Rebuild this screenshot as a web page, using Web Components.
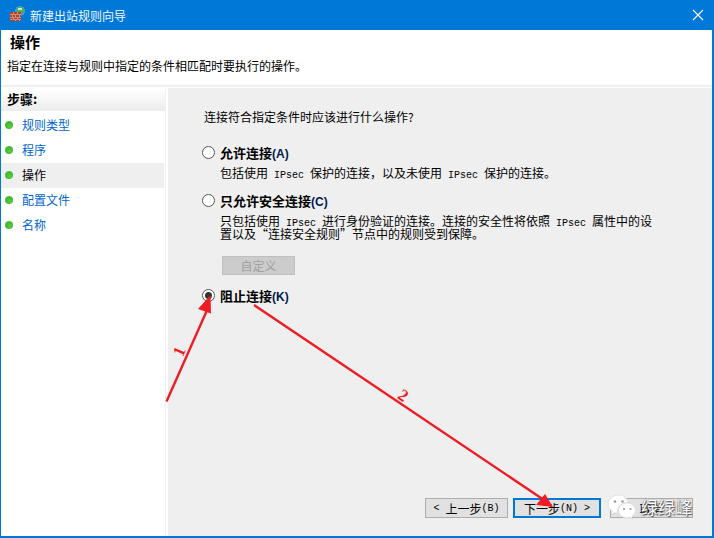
<!DOCTYPE html>
<html lang="zh-CN"><head><meta charset="utf-8">
<style>
html,body{margin:0;padding:0;background:#fff}
body{width:714px;height:538px;overflow:hidden;font:12px "Noto Sans CJK SC","Liberation Sans",sans-serif;color:#000}
</style></head><body>
<wiz-window>
  <wiz-titlebar slot="title">新建出站规则向导</wiz-titlebar>
  <wiz-header slot="header" heading="操作">指定在连接与规则中指定的条件相匹配时要执行的操作。</wiz-header>
  <wiz-steps slot="steps">
    <wiz-step done>规则类型</wiz-step>
    <wiz-step done>程序</wiz-step>
    <wiz-step active>操作</wiz-step>
    <wiz-step done>配置文件</wiz-step>
    <wiz-step done>名称</wiz-step>
  </wiz-steps>
  <wiz-content slot="content">
    <wiz-radio key="A" label="允许连接">包括使用<m-t> IPsec </m-t>保护的连接，以及未使用<m-t> IPsec </m-t>保护的连接。</wiz-radio>
    <wiz-radio key="C" label="只允许安全连接" extra>只包括使用<m-t> IPsec </m-t>进行身份验证的连接。连接的安全性将依照<m-t> IPsec </m-t>属性中的设置以及“连接安全规则”节点中的规则受到保障。</wiz-radio>
    <wiz-radio key="K" label="阻止连接" checked></wiz-radio>
    <wiz-buttons slot="buttons"></wiz-buttons>
  </wiz-content>
  <wiz-annot slot="annot"></wiz-annot>
</wiz-window>
<script>
function def(name, css, html){
  customElements.define(name, class extends HTMLElement{
    connectedCallback(){
      if(this.shadowRoot) return;
      const r=this.attachShadow({mode:'open'});
      r.innerHTML='<style>'+css+'</style>'+(typeof html==='function'?html(this):html);
    }
  });
}
const mono='"Liberation Mono",monospace';
def('m-t',':host{display:inline;font-family:'+mono+';font-size:10px;line-height:0;white-space:pre}','<slot></slot>');
def('wiz-window',`
:host{display:flex;flex-direction:column;position:relative;width:714px;height:538px;box-sizing:border-box;border:solid #0078d7;border-width:0 2px 2px 1px;background:#fff;overflow:hidden}
.main{flex:1;display:flex;min-height:0}
`,`<slot name="title"></slot><slot name="header"></slot><div class="main"><slot name="steps"></slot><slot name="content"></slot></div><slot name="annot"></slot>`);
def('wiz-titlebar',`
:host{display:flex;align-items:center;height:30px;margin-right:-2px;margin-left:-1px;background:#0078d7;color:#fff;font-size:12px;flex:none}
svg.i{margin:-3px 4px 0 9px;flex:none}
.t{flex:1;opacity:.95}
svg.x{margin-right:10px;flex:none}
`,`<svg class="i" width="17" height="17" viewBox="0 0 17 17" shape-rendering="crispEdges">
<circle cx="11" cy="6" r="5" fill="#3f9ad8"/><path d="M7 5a5 5 0 0 1 8-2l0 4-5 1z" fill="#52b043"/><path d="M9 3h4v2h-4z" fill="#bfe3f7"/>
<rect x="1" y="7" width="11" height="9" fill="#a5442f"/>
<path d="M1 9.5h11M1 12h11M1 14.500h11M4 7v2M8 7v2M6 10v2M10 10v2M3 10v2M4 12v2M8 12v2M6 14v2M10 14v2" stroke="#d98a72" stroke-width="1"/>
</svg><span class="t"><slot></slot></span><svg class="x" width="12" height="12" viewBox="0 0 12 12"><path d="M1 1l10 10M11 1L1 11" stroke="#fff" stroke-width="1.1"/></svg>`);
def('wiz-header',`
:host{display:block;height:58px;box-sizing:border-box;padding:1px 0 0 6px;background:#fff;flex:none}
h1{margin:0 0 0 3px;font:700 15px/21px "Noto Sans CJK SC",sans-serif}
p{margin:6px 0 0;font-size:12px;line-height:16px;color:#000}
.r{height:2px;background:#f0f0f0;margin:11px 0 0 -6px}
`,h=>`<h1>${h.getAttribute('heading')}</h1><p><slot></slot></p><div class="r"></div>`);
def('wiz-steps',`
:host{display:flex;flex-direction:column;width:164px;flex:none;background:#fff;border-right:1px solid #f0f0f0;margin-right:2px;margin-top:1px}
.hd{height:22px;line-height:20px;padding-left:6px;font-weight:700;font-size:13px;background:linear-gradient(#fff,#ececec);margin-bottom:2px}
.list{display:flex;flex-direction:column}
`,`<div class="hd">步骤:</div><div class="list"><slot></slot></div>`);
def('wiz-step',`
:host{display:flex;align-items:center;height:25px;box-sizing:border-box;padding-bottom:2px;font-size:12px;color:#0066cc;margin-right:1px}
:host([active]){background:#efefef;color:#000}
i{width:8px;height:8px;border-radius:50%;margin:1px 9px 0 4px;background:radial-gradient(circle at 60% 65%,#5ad03c 0,#3fb82e 55%,#8fc98a 100%);flex:none}
`,`<i></i><slot></slot>`);
def('wiz-content',`
:host{flex:1;display:flex;flex-direction:column;background:#efefef;padding:21px 0 0 36px;position:relative;min-width:0}
.q{font-size:12px;line-height:16px;margin-bottom:20px}
`,`<div class="q">连接符合指定条件时应该进行什么操作?</div><slot></slot><slot name="buttons"></slot>`);
def('wiz-radio',`
:host{display:grid;grid-template-columns:18px 436px;margin:0 0 14px -2px}
.c{width:11px;height:11px;border:1px solid #555;border-radius:50%;background:#fff;margin-top:1px;position:relative;box-sizing:content-box}
.c.on::after{content:"";position:absolute;left:2px;top:2px;width:7px;height:7px;border-radius:50%;background:#333}
.l{font-weight:700;font-size:13px;line-height:16px;margin-bottom:5px}
.l span{font:700 12px "Liberation Sans",sans-serif;color:#001a4d}
.d{grid-column:2;font-size:12px;line-height:13px}
button{grid-column:2;margin:16px 0 -1px 2px;width:73px;height:19px;background:#ccc;border:1px solid #bfbfbf;color:#a0a0a0;font:12px "Noto Sans CJK SC",sans-serif;padding:0;display:block}
`,h=>`<div class="c ${h.hasAttribute('checked')?'on':''}"></div><div class="l">${h.getAttribute('label')}<span>(${h.getAttribute('key')})</span></div>${h.textContent.trim()?'<div class="d"><slot></slot></div>':''}${h.hasAttribute('extra')?'<button>自定义</button>':''}`);
def('wiz-buttons',`
:host{position:absolute;left:257px;bottom:18px;display:flex;gap:5px}
b{display:flex;align-items:center;justify-content:center;height:20px;box-sizing:border-box;border:1px solid #adadad;background:#e1e1e1;font:400 12px "Noto Sans CJK SC",sans-serif;white-space:pre}
.a{width:83px}.n{width:88px;border:2px solid #0078d7}.c{width:83px;margin-left:4px}
tt{font:10px ${mono}}
`,`<b class="a"><tt>&lt; </tt>上一步<tt>(B)</tt></b><b class="n">下一步<tt>(N) &gt;</tt></b><b class="c">取消</b>`);
def('wiz-annot',`
:host{position:absolute;left:-1px;top:0;width:714px;height:538px;display:block;pointer-events:none}
svg{position:absolute;left:0;top:0}
.n{position:absolute;color:#ee1c25;font:700 17px "Liberation Serif",serif;line-height:17px}
.n1{left:175px;top:343px;transform:rotate(-67deg)}
.n2{left:399px;top:387px;transform:rotate(35deg)}
.wm{position:absolute;left:641px;top:497px;font:17px/20px "Noto Sans CJK SC",sans-serif;color:#fff;text-shadow:0 0 1px #444,1px 1px 1px #555}
`,`<svg width="714" height="538" viewBox="0 0 714 538">
<path d="M166.500 401.500L208 308M254 305L544 500" stroke="#ee1c25" stroke-width="2.400" fill="none"/>
<path d="M210.500 295L198 309L211 313.500zM553 507L536 505L545 494z" fill="#ee1c25"/>
<path d="M619 495c-6 0-11 4-11 9.200 0 3 1.600 5.500 4.200 7.200l-1 3.100 3.500-1.800c1 .3 2.200.5 3.300.6-.2-.7-.3-1.400-.3-2.100 0-4.800 4.300-8.500 9.800-8.500h.8C627 498 623.500 495 619 495z" fill="#fff" stroke="#c8c8c8" stroke-width=".5"/>
<path d="M635.500 510.500c0-4.200-3.800-7.500-8.500-7.500s-8.500 3.300-8.500 7.500 3.800 7.500 8.500 7.500c1 0 1.900-.1 2.800-.4l2.700 1.400-.7-2.500c2.200-1.400 3.700-3.500 3.700-6z" fill="#fff" stroke="#c8c8c8" stroke-width=".5"/>
<circle cx="615" cy="501.500" r="1.300" fill="#999"/><circle cx="622.500" cy="501.500" r="1.300" fill="#999"/><circle cx="624" cy="509" r="1.100" fill="#999"/><circle cx="630.500" cy="509" r="1.100" fill="#999"/>
</svg><span class="n n1">1</span><span class="n n2">2</span><span class="wm">绿绿峰</span>`);
</script>
</body></html>
